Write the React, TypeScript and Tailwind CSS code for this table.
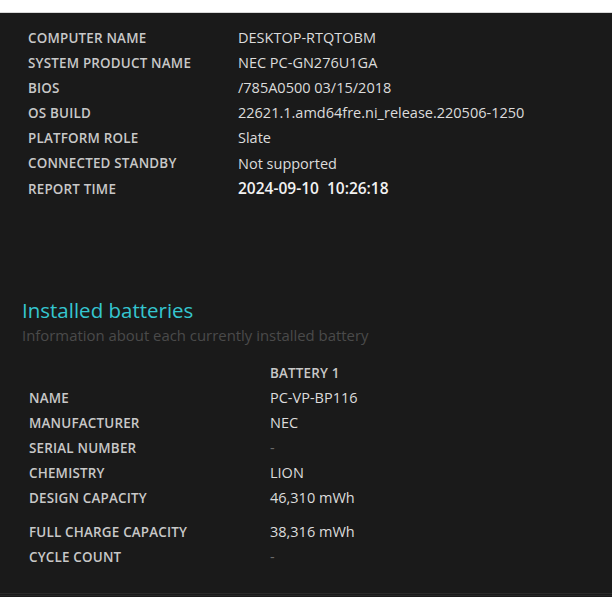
const systemInfo = [
  { label: 'COMPUTER NAME', value: 'DESKTOP-RTQTOBM' },
  { label: 'SYSTEM PRODUCT NAME', value: 'NEC PC-GN276U1GA' },
  { label: 'BIOS', value: '/785A0500 03/15/2018' },
  { label: 'OS BUILD', value: '22621.1.amd64fre.ni_release.220506-1250' },
  { label: 'PLATFORM ROLE', value: 'Slate' },
  { label: 'CONNECTED STANDBY', value: 'Not supported' },
  { label: 'REPORT TIME', value: '2024-09-10\u00a0\u00a010:26:18', strong: true },
];

const batteryInfo = [
  { label: 'NAME', value: 'PC-VP-BP116' },
  { label: 'MANUFACTURER', value: 'NEC' },
  { label: 'SERIAL NUMBER', value: '-', dim: true },
  { label: 'CHEMISTRY', value: 'LION' },
  { label: 'DESIGN CAPACITY', value: '46,310 mWh' },
  { label: 'FULL CHARGE CAPACITY', value: '38,316 mWh', gap: true },
  { label: 'CYCLE COUNT', value: '-', dim: true },
];

const font = "font-['Open_Sans','Noto_Sans',sans-serif]";

export default function App() {
  return (
    <div className={`w-[612px] h-[612px] bg-white pt-[12px] ${font}`}>
      <div className="h-[585px] bg-[#1a1a1a] border-t border-[#d8d8d8] flex flex-col">
        {/* System info */}
        <div className="pl-[28px] pt-[12px]">
          {systemInfo.map((row) => (
            <div key={row.label} className="flex items-center h-[25.2px]">
              <div className="w-[210px] text-[13.4px] font-semibold text-[#c8c8c8] tracking-[0.2px]">
                {row.label}
              </div>
              <div
                className={
                  row.strong
                    ? 'text-[15.5px] font-semibold text-[#f2f2f2]'
                    : 'text-[14.5px] text-[#dcdcdc]'
                }
              >
                {row.value}
              </div>
            </div>
          ))}
        </div>

        {/* Installed batteries */}
        <div className="pl-[22px] mt-[96px]">
          <h2 className="text-[20.5px] leading-[26px] text-[#35c6d0]">Installed batteries</h2>
          <p className="text-[14.9px] leading-[24px] text-[#4a4a4a]">
            Information about each currently installed battery
          </p>
        </div>

        <div className="pl-[29px] mt-[13px]">
          <div className="flex items-center h-[25px]">
            <div className="w-[241px]" />
            <div className="text-[13.4px] font-semibold text-[#c8c8c8] tracking-[0.2px]">BATTERY 1</div>
          </div>
          {batteryInfo.map((row) => (
            <div
              key={row.label}
              className={`flex items-center h-[25px] ${row.gap ? 'mt-[9px]' : ''}`}
            >
              <div className="w-[241px] text-[13.4px] font-semibold text-[#c8c8c8] tracking-[0.2px]">
                {row.label}
              </div>
              <div className={`text-[14.5px] ${row.dim ? 'text-[#6a6a6a]' : 'text-[#dcdcdc]'}`}>
                {row.value}
              </div>
            </div>
          ))}
        </div>

        <div className="mt-auto border-t border-[#2a2a2a] h-[2px]" />
        <div className="border-t border-[#262626] h-[2px]" />
      </div>
    </div>
  );
}
